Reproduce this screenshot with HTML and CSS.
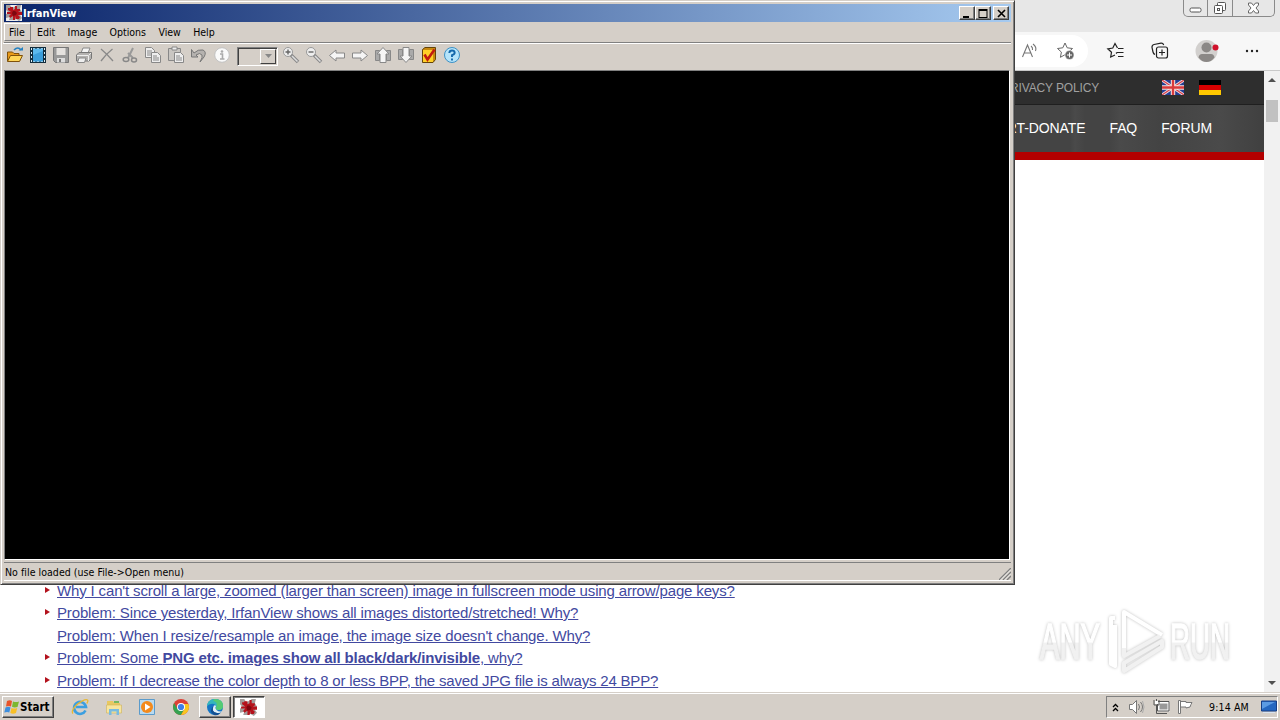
FILE: index.html
```html
<!DOCTYPE html>
<html lang="en">
<head>
    <meta charset="UTF-8">
    <meta name="viewport" content="width=device-width, initial-scale=1.0">
    <title>IrfanView</title>
    <link rel="stylesheet" href="styles.css">
</head>
<body>
    <!-- Shared icon -->
    <svg width="0" height="0" class="defs">
        <symbol id="irfan" viewBox="0 0 16 16">
            <path d="M0 0h4l2 3 4-2 1-1h4l-1 4 2 3-2 3 2 3-3 3-3-2-3 1-4 0 1-3-4 1V9l3-1-3-3z" fill="#a39c9a"/>
            <path d="M4 2h3v3l2-1V1h2v3h3v2l-2 1h4v3h-4l2 2-1 2h-3v-3l-1 4H7v-4l-3 2-1-2 2-2H1V7h4L2 5V3h2z" fill="#b5121b"/>
            <path d="M7 6h2l2 2-1 2-3 1-1-3z" fill="#7d0810"/>
        </symbol>
        <linearGradient id="fade" x1="0" y1="0" x2="0" y2="1">
            <stop offset="50%" stop-color="#fff"/>
            <stop offset="52%" stop-color="#f1f1f1"/>
        </linearGradient>
    </svg>

    <div class="desktop">
        <!-- Browser behind the viewer -->
        <div class="browser">
            <div class="tabstrip">
                <div class="caption">
                    <span class="cap"><svg width="13" height="6"><rect x="1" y="1" width="11" height="4" rx="1.5" fill="#fff" stroke="#555"/></svg></span>
                    <span class="cap"><svg width="14" height="14"><g fill="#fff" stroke="#555"><rect x="4.500" y="1.500" width="8" height="8" rx="1"/><rect x="1.500" y="4.500" width="8" height="8" rx="1"/><rect x="4.500" y="7.500" width="2" height="2"/></g></svg></span>
                    <span class="cap wide"><svg width="13" height="12"><path d="M1.500 1h3l2 2.500L8.500 1h3v2L9 6l2.500 3v2h-3l-2-2.500L4.500 11h-3V9L4 6 1.500 3z" fill="#fff" stroke="#666"/></svg></span>
                </div>
            </div>
            <div class="browserbar">
                <div class="address">
                    <svg width="18" height="18" viewBox="0 0 18 18" fill="none" stroke="#767676" stroke-width="1.100"><path d="M1.500 15L6.500 3l5 12M3.300 11h6.500M10 4q2 1.500 1.500 4M12 2q4 3 2.500 7"/></svg>
                    <svg width="20" height="20" viewBox="0 0 20 20"><path d="M9 2l2.200 4.800 5.300.7-3.900 3.600 1 5.200L9 13.700 4.400 16.300l1-5.200L1.500 7.500l5.300-.7z" fill="#fff" stroke="#666"/><circle cx="13.500" cy="14" r="4.500" fill="#666" stroke="#fff" stroke-width=".5"/><path d="M13.500 11.500v5M11 14h5" stroke="#fff"/></svg>
                </div>
                <svg class="b-icon" width="20" height="20" viewBox="0 0 20 20" fill="none" stroke="#222" stroke-width="1.200"><path d="M11.500 7L9 2.500 6.800 7l-5 .8 3.700 3.500L4.700 16 9 14M12 7.500h5.500M11 11.500h6.500M12 15.500h5.500M11 11.500l-1 1"/></svg>
                <svg class="b-icon" width="20" height="20" viewBox="0 0 20 20" fill="none" stroke="#222" stroke-width="1.200"><path d="M5 13.500Q3.500 13 3 11L2 6.500Q1.800 4 4 3.500l7-1.300Q13 2 13.700 4"/><rect x="6.500" y="6" width="11" height="11" rx="2"/><path d="M12 8.500v6M9 11.500h6"/></svg>
                <svg class="avatar" width="24" height="24" viewBox="0 0 24 24"><circle cx="11.500" cy="12" r="11" fill="#d2d0ce"/><circle cx="11.500" cy="8.500" r="5" fill="#8b8886"/><path d="M3.500 18.500Q4 15 7 15h9q3 0 3.500 3.500Q16 23 11.500 23t-8-4.500z" fill="#8b8886"/><circle cx="20.500" cy="8.500" r="3" fill="#d0112b"/></svg>
                <svg class="dots" width="14" height="4" fill="#222"><circle cx="2" cy="2" r="1.200"/><circle cx="7" cy="2" r="1.200"/><circle cx="12" cy="2" r="1.200"/></svg>
            </div>
            <div class="viewport">
                <div class="page">
                    <div class="topbar">
                        <span class="privacy">PRIVACY POLICY</span>
                        <svg width="22" height="15" viewBox="0 0 22 15"><path fill="#233e94" d="M0 0h22v15H0z"/><path d="M0 0l22 15M22 0L0 15" stroke="#f2dfe0" stroke-width="3"/><path d="M0 0l22 15M22 0L0 15" stroke="#d8404c" stroke-width="1.200"/><path d="M11 0v15M0 7.500h22" stroke="#f6e6e2" stroke-width="4.400"/><path d="M11 0v15M0 7.500h22" stroke="#d93a3c" stroke-width="2.400"/></svg>
                        <svg width="22" height="15" viewBox="0 0 22 15"><path d="M0 0h22v5H0z"/><path fill="#d60000" d="M0 5h22v5H0z"/><path fill="#ffc800" d="M0 10h22v5H0z"/></svg>
                    </div>
                    <div class="nav">
                        <span>SUPPORT-DONATE</span>
                        <span>FAQ</span>
                        <span>FORUM</span>
                    </div>
                    <div class="content">
                        <ul class="faq">
                            <li><a>Why I can't scroll a large, zoomed (larger than screen) image in fullscreen mode using arrow/page keys?</a></li>
                            <li><a>Problem: Since yesterday, IrfanView shows all images distorted/stretched! Why?</a></li>
                            <li class="plain"><a>Problem: When I resize/resample an image, the image size doesn't change. Why?</a></li>
                            <li><a>Problem: Some <b>PNG etc. images show all black/dark/invisible</b>, why?</a></li>
                            <li><a class="tight">Problem: If I decrease the color depth to 8 or less BPP, the saved JPG file is always 24 BPP?</a></li>
                        </ul>
                    </div>
                </div>
                <div class="scrollbar">
                    <svg width="8" height="4"><path d="M0 4l4-4 4 4z" fill="#505050"/></svg>
                    <div class="thumb"></div>
                    <svg width="8" height="4"><path d="M0 0l4 4 4-4z" fill="#505050"/></svg>
                </div>
            </div>
        </div>

        <!-- Taskbar -->
        <div class="taskbar">
            <div class="start">
                <svg width="16" height="16" viewBox="0 0 16 16"><path d="M3 2q3-1.500 5 0L7 7.500q-2.500-1-5 0z" fill="#e8542a"/><path d="M9 2.500q3 1 6 0L13.500 8q-3 1-5.500-.2z" fill="#7db72f"/><path d="M1.500 8.500q3-1.500 5 0l-1.200 5q-2-1-5 0z" fill="#3d8ede"/><path d="M7.500 9q2.500 1.200 5.700 0L12 14q-3 1.500-5.700 0z" fill="#f8bf25"/></svg>
                <span>Start</span>
            </div>
            <div class="quick">
                <svg width="18" height="18" viewBox="0 0 18 18"><path d="M14.500 12.500A6 6 0 1 1 15 9H5" fill="none" stroke="#3c9fe0" stroke-width="2.600"/><path d="M2 15.500Q-.5 13 6 6.500 14 .5 16.500 2q1 1-.8 3.500" fill="none" stroke="#e8b831" stroke-width="1.300"/></svg>
                <svg width="18" height="18" viewBox="0 0 18 18"><path d="M2 3h6l1 2h6v10H2z" fill="#e8c860"/><path d="M1.500 7h15v8h-15z" fill="#f8e59c" stroke="#cdb15c" stroke-width=".6"/><path d="M9 3h5v2H9z" fill="#74b861"/><path d="M4 17v-6h10v6h-2.500v-3.500h-5V17z" fill="#79bbdf"/></svg>
                <svg width="18" height="18" viewBox="0 0 18 18"><path d="M1.500 1.500h15v15h-15z" fill="#b9daf0" stroke="#5b9bcb"/><circle cx="9" cy="9" r="6" fill="#f38a1c"/><path d="M7 5.500v7L12.500 9z" fill="#fff"/></svg>
                <svg width="18" height="18" viewBox="0 0 18 18"><circle cx="9" cy="9" r="8" fill="#dd4037"/><path d="M2.100 5A8 8 0 0 0 9 17l3.400-6H5.500z" fill="#35a251"/><path d="M9 17A8 8 0 0 0 16.400 6H9l3.500 5z" fill="#f9c620"/><circle cx="9" cy="9" r="4" fill="#fff"/><circle cx="9" cy="9" r="3.100" fill="#3e7ee8"/></svg>
            </div>
            <div class="task">
                <svg width="18" height="18" viewBox="0 0 18 18"><circle cx="9" cy="9" r="8" fill="#1475c5"/><path d="M1 9Q1 1 9 1t8 7q0 4-4.500 4Q9 12 10.300 9 9 5 5 6T1 9z" fill="#35b6bd"/><path d="M8 1.100Q17 1 17 8q0 4-4.500 4Q9 12 10.300 9q2-5-3-6z" fill="#55cb73"/><path d="M7.500 8Q5 14 11 15q3.500.5 5-1.500-3.500.5-5.500-1.500T10 8q-1-1.500-2.500 0z" fill="#e1eff5"/><path d="M7.500 8Q5 14 11 15q2 .5 4-.5Q12 18 8 17 2 13 7.500 8z" fill="#145092"/></svg>
            </div>
            <div class="task active"><svg width="17" height="17"><use href="#irfan"/></svg></div>
            <div class="tray">
                <svg class="chev" width="7" height="9" fill="none" stroke="#000" stroke-width="1.300"><path d="M1 4l2.500-2.500L6 4M1 8l2.500-2.500L6 8"/></svg>
                <svg class="snd" width="18" height="16" viewBox="0 0 18 16"><path d="M1.500 5.500h3l4-4v13l-4-4h-3z" fill="#fff" stroke="#777"/><path d="M10.500 5q2 3 0 6M12.500 3q4 5 0 10" fill="none" stroke="#777"/><path d="M14.500 2q3 6 0 12" fill="none" stroke="#aaa"/></svg>
                <svg class="net" width="18" height="16" viewBox="0 0 18 16"><path d="M5.500 3.500h10v8h-10z" fill="#999" stroke="#fff" stroke-width="2"/><path d="M4.500 2.500h11.500v9.500H4.500zM8 14.500h6" fill="none" stroke="#555"/><path d="M1 1v5h5V1M3.500 6v8.500H8M3.500 0v3" fill="none" stroke="#555"/><path d="M2 2h3v3H2z" fill="#fff"/></svg>
                <svg class="flag" width="17" height="16" viewBox="0 0 17 16"><path d="M1.500 1.500h2v13h-2zM3.500 2.500H9v1h6q-1 1.500-2 4.500l-4 1V8H3.500z" fill="#fff" stroke="#777"/></svg>
                <span class="clock">9:14 AM</span>
                <svg class="show" width="16" height="14" viewBox="0 0 16 14"><path d="M.5 1h15v10H.5z" fill="#2467c0" stroke="#173f86"/><path d="M1 2h13L1 9z" fill="#5b9be3"/><path d="M2 12h12v1H2z" fill="#d9e3ef"/></svg>
            </div>
        </div>

        <!-- Viewer window -->
        <div class="window">
            <div class="titlebar">
                <svg class="appicon" width="16" height="16"><rect width="16" height="16" fill="#eee"/><use href="#irfan"/></svg>
                <span class="title">IrfanView</span>
                <div class="winbtns">
                    <i><svg width="10" height="9"><path d="M1 7h6v2H1z"/></svg></i>
                    <i><svg width="10" height="9"><path d="M.5 0h9v9h-9zM1.500 2v6h7V2z" fill-rule="evenodd"/></svg></i>
                    <i class="close"><svg width="9" height="9"><path d="M1 1l7 7M8 1L1 8" stroke="#000" stroke-width="1.600"/></svg></i>
                </div>
            </div>
            <div class="menubar">
                <span class="on">File</span>
                <span>Edit</span>
                <span>Image</span>
                <span>Options</span>
                <span>View</span>
                <span>Help</span>
            </div>
            <div class="toolbar">
                <!-- open -->
                <svg viewBox="0 0 18 18"><path d="M1.500 15V6h5l1.500 1.500h5V15z" fill="#e99a18" stroke="#80510a"/><path d="M1.500 15.500l3-6h12l-3 6z" fill="#ffd657" stroke="#80510a"/><path d="M8 4q4-4 7 0" fill="none" stroke="#2480c0" stroke-width="1.600"/><path d="M12.500 4.500h4.500V1z" fill="#2480c0"/></svg>
                <!-- slideshow -->
                <svg viewBox="0 0 18 18"><path d="M1 1h16v16H1z" fill="#122c3c"/><path d="M4 2.500h10v13H4z" fill="#5bb9ee"/><path d="M4 9l10-4v10.500H4z" fill="#3a9edb"/><path d="M2.500 2v14M15.500 2v14" stroke="#d8edf8" stroke-dasharray="2 2"/><path d="M4 2.500h10M4 15.500h10" stroke="#8fc9e8" stroke-dasharray="2 2"/></svg>
                <!-- save -->
                <svg viewBox="0 0 18 18"><path d="M1.500 1.500h15v15h-13l-2-2z" fill="#999" stroke="#777"/><path d="M4.500 2h9v7h-9z" fill="#e5e2df"/><path d="M5 12h8v4.500H5z" fill="#ddd"/><path d="M7 13h2v3H7z" fill="#777"/></svg>
                <!-- print -->
                <svg viewBox="0 0 18 18"><path d="M6 7l2-5h7l-2 5z" fill="#f4f4f4" stroke="#888"/><path d="M1.500 9L4 6.500h12.500v6L14 15H1.500z" fill="#b4b2b0" stroke="#777"/><path d="M2 9.500h11.500L16 7M13.500 10v5" fill="none" stroke="#eee"/><path d="M4 12h7l-1.500 4.500H2.500z" fill="#eee" stroke="#888"/></svg>
                <!-- delete -->
                <svg viewBox="0 0 18 18"><path d="M3 3q6 5 12 12M14.500 3Q8 8 3 15" fill="none" stroke="#888" stroke-width="1.300"/></svg>
                <!-- cut -->
                <svg viewBox="0 0 18 18"><path d="M12 2L7 12M7 7l5 5" stroke="#999" stroke-width="2"/><ellipse cx="5" cy="13.500" rx="2.800" ry="2" fill="none" stroke="#888" stroke-width="1.500"/><ellipse cx="13" cy="14" rx="2.500" ry="2" fill="none" stroke="#888" stroke-width="1.500"/></svg>
                <!-- copy -->
                <svg viewBox="0 0 18 18"><g fill="#eee" stroke="#888"><path d="M1.500 1.500h6l3 3v7h-9z"/><path d="M7.500 6.500h6l3 3v7h-9z"/></g><path d="M3 5h5M3 7h4M3 9h4M9 10h4M9 12h6M9 14h6" stroke="#888"/></svg>
                <!-- paste -->
                <svg viewBox="0 0 18 18"><path d="M1.500 2.500h12v12h-12z" fill="#c9c6c2" stroke="#888"/><path d="M5 1h5v3H5z" fill="#eee" stroke="#888"/><path d="M7.500 6.500h6l3 3v7h-9z" fill="#eee" stroke="#888"/><path d="M9 10h4M9 12h6M9 14h6" stroke="#888"/></svg>
                <!-- undo -->
                <svg viewBox="0 0 18 18"><path d="M4 7q4-4 9-3 4 2 1 7l-4 5q3-5 2-7-2-3-6 0l2 2H1.500V3.500z" fill="#b5b2af" stroke="#777"/></svg>
                <!-- info -->
                <svg viewBox="0 0 18 18"><circle cx="9" cy="9" r="7.300" fill="#fafafa" stroke="#c2c2c2"/><circle cx="9" cy="5.500" r="1.300" fill="#aaa"/><path d="M7 8h2.500v5M7 13h4.500" fill="none" stroke="#aaa" stroke-width="1.600"/></svg>
                <div class="combo"><i><svg width="7" height="4"><path d="M0 0h7L3.500 4z" fill="#888"/></svg></i></div>
                <!-- zoom in, zoom out -->
                <svg viewBox="0 0 18 18"><path d="M9 9l7 7" stroke="#888" stroke-width="3.500"/><path d="M10 10l5.500 5.500" stroke="#ddd" stroke-width="1.500"/><circle cx="6" cy="6" r="4.500" fill="#eee" stroke="#999"/><path d="M6 3.500v5M3.500 6h5" stroke="#666" stroke-width="1.400"/></svg>
                <svg viewBox="0 0 18 18"><path d="M9 9l7 7" stroke="#888" stroke-width="3.500"/><path d="M10 10l5.500 5.500" stroke="#ddd" stroke-width="1.500"/><circle cx="6" cy="6" r="4.500" fill="#eee" stroke="#999"/><path d="M3.500 6h5" stroke="#666" stroke-width="1.400"/></svg>
                <!-- previous, next -->
                <svg viewBox="0 0 18 18"><path d="M1.500 9.500L8 4v3h8.500v5H8v3z" fill="#f5f5f5" stroke="#888"/></svg>
                <svg viewBox="0 0 18 18"><path d="M16.500 9.500L10 4v3H1.500v5H10v3z" fill="#f5f5f5" stroke="#888"/></svg>
                <!-- page up, page down -->
                <svg viewBox="0 0 18 18"><path d="M1.500 4.500h4v10h-4zM12.500 4.500h4v10h-4z" fill="#aaa" stroke="#888"/><path d="M9 1.500L15 8h-3v8.500H6V8H3z" fill="#f5f5f5" stroke="#888"/></svg>
                <svg viewBox="0 0 18 18"><path d="M1.500 3.500h4v10h-4zM12.500 3.500h4v10h-4z" fill="#aaa" stroke="#888"/><path d="M9 16.500L15 10h-3V1.500H6V10H3z" fill="#f5f5f5" stroke="#888"/></svg>
                <!-- settings -->
                <svg viewBox="0 0 18 18"><path d="M2.500 3.500L5 1.500h10.500v12l-2.500 3H2.500z" fill="#c98a10" stroke="#65440a"/><path d="M3 4h10v12H3z" fill="#ffd028"/><path d="M4.500 8.500l3 5L14.500 3.500" fill="none" stroke="#c21b10" stroke-width="2.600"/></svg>
                <!-- help -->
                <svg viewBox="0 0 18 18"><circle cx="9" cy="9" r="7.500" fill="#b5e4fa" stroke="#3c91c6"/><path d="M6.300 7Q6.500 4.500 9 4.500t2.700 2.300Q11.700 8.500 9 9.200v1.800M9 12.500v2" fill="none" stroke="#1468ab" stroke-width="1.900"/></svg>
            </div>
            <div class="canvas"></div>
            <div class="status">
                <span>No file loaded (use File-&gt;Open menu)</span>
                <svg width="12" height="12"><path d="M0 12L12 0M4 12l8-8M8 12l4-4" stroke="#808080" stroke-width="1.400"/><path d="M1.500 12L12 1.500M5.500 12L12 5.500" stroke="#fff" stroke-width=".7"/></svg>
            </div>
        </div>

        <!-- Watermark -->
        <svg class="mark" width="212" height="76" viewBox="0 0 212 76">
            <g class="mark-text">
                <text x="8" y="54" textLength="60" lengthAdjust="spacingAndGlyphs">ANY</text>
                <text x="138" y="54" textLength="60" lengthAdjust="spacingAndGlyphs">RUN</text>
            </g>
            <g class="mark-logo">
                <path d="M92 43V7l38 23M83 13h-4v46l4 2V20"/>
                <path class="low" d="M92 43v8l36-20M92 58v8l38-24v-6z"/>
            </g>
        </svg>
    </div>
</body>
</html>
```
FILE: styles.css
```css
body {
    margin: 0;
    overflow: hidden;
    font-family: "DejaVu Sans Condensed", "DejaVu Sans", sans-serif;
    font-size: 10.5px;
    color: #000;
}
svg {
    display: block;
    flex: none;
}
.defs {
    position: absolute;
}
.desktop {
    position: relative;
    width: 1280px;
    height: 720px;
    display: flex;
    flex-direction: column;
    overflow: hidden;
}

/* browser */
.browser {
    height: 692px;
    display: flex;
    flex-direction: column;
    background: #fff;
    font-family: "Liberation Sans", Arial, sans-serif;
}
.tabstrip {
    height: 32px;
    background: #e7e7e7;
    display: flex;
    justify-content: flex-end;
}
.caption {
    box-sizing: border-box;
    height: 17px;
    margin-right: 5px;
    display: flex;
    border: 1px solid #8a8a8a;
    border-top: 0;
    border-radius: 0 0 5px 5px;
}
.cap {
    width: 24px;
    display: flex;
    align-items: center;
    justify-content: center;
    border-right: 1px solid #8a8a8a;
}
.cap:first-child {
    align-items: flex-end;
    padding-bottom: 3px;
    box-sizing: border-box;
}
.cap.wide {
    width: 41px;
    border-right: 0;
}
.browserbar {
    box-sizing: border-box;
    height: 39px;
    background: #f7f7f7;
    border-bottom: 1px solid #c9c9c9;
    display: flex;
    align-items: center;
}
.address {
    box-sizing: border-box;
    width: 1088px;
    height: 32px;
    padding-right: 12px;
    background: #fff;
    border-radius: 16px;
    display: flex;
    align-items: center;
    justify-content: flex-end;
    gap: 17px;
}
.b-icon {
    margin-left: 18px;
    margin-right: 6px;
}
.avatar {
    margin-left: 19px;
}
.dots {
    margin-left: 26px;
}
.viewport {
    flex: 1;
    display: flex;
}
.page {
    width: 1264px;
    display: flex;
    flex-direction: column;
}
.topbar {
    box-sizing: border-box;
    height: 34px;
    padding-right: 43px;
    background: #2e2e2e;
    border-bottom: 1px solid #1f1f1f;
    display: flex;
    align-items: center;
    justify-content: flex-end;
    gap: 15px;
    color: #a0a0a0;
    font-size: 12px;
}
.topbar svg {
    margin-top: -1px;
}
.privacy {
    margin-right: 48px;
    letter-spacing: -0.15px;
}
.nav {
    box-sizing: border-box;
    height: 55px;
    padding: 0 52px 2px 0;
    background: linear-gradient(90deg, #444 1070px, #4a4a4a 1075px, #444 1085px, #444 1110px, #4a4a4a 1120px, #434343 1160px, #4a4a4a 1220px, #404040);
    border-bottom: 8px solid #b30000;
    display: flex;
    align-items: center;
    justify-content: flex-end;
    gap: 24px;
    color: #fff;
    font-size: 14px;
    letter-spacing: -0.1px;
}
.content {
    flex: 1;
    display: flex;
    align-items: flex-end;
}
.faq {
    margin: 0;
    padding: 0 0 0 45px;
    list-style: none;
    font-size: 15px;
    line-height: 22.5px;
    letter-spacing: -0.15px;
}
.faq li {
    display: flex;
    align-items: center;
    white-space: nowrap;
}
.faq li::before {
    content: "";
    margin: -2px 7px 0 0;
    border-left: 5px solid #b3121d;
    border-top: 3.5px solid transparent;
    border-bottom: 3.5px solid transparent;
}
.faq li.plain::before {
    visibility: hidden;
}
.faq a {
    color: #4249a0;
    text-decoration: underline;
}
.faq .tight {
    letter-spacing: -0.185px;
}
.scrollbar {
    box-sizing: border-box;
    width: 16px;
    padding: 7px 0;
    background: #f1f1f1;
    display: flex;
    flex-direction: column;
    align-items: center;
}
.thumb {
    width: 12px;
    height: 22px;
    margin: 18px 0 auto;
    background: #c1c1c1;
}

/* taskbar */
.taskbar {
    box-sizing: border-box;
    height: 28px;
    padding: 2px 2px 1px 2px;
    background: #d5cfc8;
    border-top: 1px solid #d5cfc8;
    box-shadow: inset 0 1px #fff;
    display: flex;
    align-items: center;
}
.start, .task {
    box-sizing: border-box;
    height: 22px;
    border: 1px solid;
    border-color: #fff #404040 #404040 #fff;
    box-shadow: inset -1px -1px #808080;
    display: flex;
    align-items: center;
}
.start {
    width: 52px;
    padding-left: 1px;
    font-size: 11.5px;
    font-weight: bold;
}
.quick {
    margin: 0 9px 0 17px;
    display: flex;
    gap: 15.5px;
}
.task {
    width: 32px;
    margin-right: 2px;
    justify-content: center;
}
.task.active {
    background: #fff;
    border-color: #404040 #fff #fff #404040;
    box-shadow: inset 1px 1px #808080;
}
.tray {
    box-sizing: border-box;
    width: 172px;
    height: 22px;
    margin-left: auto;
    padding-left: 5px;
    border: 1px solid;
    border-color: #808080 #fff #fff #808080;
    display: flex;
    align-items: center;
}
.snd {
    margin-left: 9px;
}
.net {
    margin-left: 7px;
}
.flag {
    margin-left: 6px;
}
.clock {
    width: 41px;
    margin-left: 15px;
    white-space: nowrap;
    letter-spacing: 0.15px;
}
.show {
    margin-left: 11px;
}

/* viewer window */
.window {
    position: absolute;
    left: 0;
    top: 0;
    box-sizing: border-box;
    width: 1015px;
    height: 585px;
    padding: 2px 3px 3px;
    background: #d5cfc8;
    border: 1px solid;
    border-color: #d5cfc8 #404040 #404040 #d5cfc8;
    box-shadow: inset 1px 1px #fff, inset -1px -1px #808080;
    display: flex;
    flex-direction: column;
}
.titlebar {
    height: 18px;
    margin-top: 1px;
    padding: 0 2px;
    background: linear-gradient(90deg, #0a246a, #a6caf0);
    display: flex;
    align-items: center;
    color: #fff;
}
.title {
    margin-left: 1px;
    font-size: 11px;
    font-weight: bold;
}
.winbtns {
    margin-left: auto;
    display: flex;
}
.winbtns i {
    box-sizing: border-box;
    width: 16px;
    height: 14px;
    background: #d5cfc8;
    border: 1px solid;
    border-color: #fff #404040 #404040 #fff;
    box-shadow: inset -1px -1px #808080;
    display: flex;
    align-items: center;
    justify-content: center;
}
.winbtns .close {
    margin-left: 2px;
}
.menubar {
    box-sizing: border-box;
    height: 21px;
    display: flex;
    align-items: center;
    border-bottom: 1px solid #808080;
}
.menubar span {
    box-sizing: border-box;
    height: 18px;
    line-height: 18px;
    padding: 0 6.2px;
}
.menubar .on {
    padding: 0 5px 0 4px;
    border: 1px solid;
    border-color: #fff #808080 #808080 #fff;
    line-height: 16px;
}
.toolbar {
    height: 26px;
    margin-left: -1px;
    padding-bottom: 1px;
    box-shadow: inset 0 1px #fff;
    display: flex;
    align-items: center;
}
.toolbar > svg {
    width: 18px;
    height: 18px;
    margin: -2px 2.5px 0;
}
.combo {
    box-sizing: border-box;
    width: 41px;
    height: 19px;
    margin: 0 1px 0 4px;
    border: 1px solid;
    border-color: #808080 #fff #fff #808080;
    box-shadow: inset 1px 1px #404040;
    display: flex;
    justify-content: flex-end;
}
.combo i {
    box-sizing: border-box;
    width: 16px;
    margin: 1px;
    border: 1px solid;
    border-color: #fff #404040 #404040 #fff;
    display: flex;
    align-items: center;
    justify-content: center;
}
.canvas {
    flex: 1;
    margin-right: 1px;
    background: #000;
    border: 1px solid;
    border-color: #808080 #fff #fff #808080;
    box-shadow: 0 1px #d5cfc8;
}
.status {
    box-sizing: border-box;
    height: 19px;
    margin-top: 2px;
    border-top: 1px solid #808080;
    border-bottom: 1px solid #fff;
    display: flex;
    align-items: center;
    justify-content: space-between;
}
.status span {
    padding-left: 1px;
    letter-spacing: 0.04px;
}
.status svg {
    align-self: flex-end;
}

/* watermark */
.mark {
    position: absolute;
    left: 1032px;
    top: 605px;
    filter: drop-shadow(0 0 1.5px rgba(0, 0, 0, 0.25));
}
.mark-text {
    fill: url(#fade);
    stroke: url(#fade);
    stroke-width: 1.5;
    font-family: "Liberation Sans", Arial, sans-serif;
    font-size: 50px;
}
.mark-logo {
    fill: none;
    stroke: #fff;
    stroke-width: 4;
    stroke-linejoin: round;
}
.mark-logo .low {
    stroke: #f1f1f1;
}
```
